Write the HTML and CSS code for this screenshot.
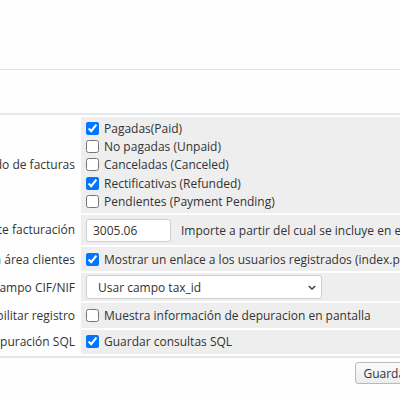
FILE: index.html
```html
<!DOCTYPE html>
<html lang="es">
<head>
<meta charset="utf-8">
<title>Facturas</title>
<link rel="stylesheet" href="styles.css">
</head>
<body>
<div class="page">
  <div class="topbar"></div>
  <div class="spacer"></div>
  <form class="section">
    <div class="grid">
      <div class="label">Estado de facturas</div>
      <div class="field list">
        <label class="opt"><input type="checkbox" checked> Pagadas(Paid)</label>
        <label class="opt"><input type="checkbox"> No pagadas (Unpaid)</label>
        <label class="opt"><input type="checkbox"> Canceladas (Canceled)</label>
        <label class="opt"><input type="checkbox" checked> Rectificativas (Refunded)</label>
        <label class="opt"><input type="checkbox"> Pendientes (Payment Pending)</label>
      </div>

      <div class="label">Límite facturación</div>
      <div class="field tall"><input class="text" type="text" value="3005.06"><span class="hint">Importe a partir del cual se incluye en el modelo 347</span></div>

      <div class="label">Enlace en área clientes</div>
      <div class="field"><label class="opt"><input type="checkbox" checked> Mostrar un enlace a los usuarios registrados (index.php)</label></div>

      <div class="label">Usar campo CIF/NIF</div>
      <div class="field sel"><div class="select">Usar campo tax_id<svg class="chev" viewBox="0 0 10 6" width="8" height="5"><path d="M1 1l4 4 4-4" fill="none" stroke="#444" stroke-width="1.8"/></svg></div></div>

      <div class="label">Habilitar registro</div>
      <div class="field"><label class="opt"><input type="checkbox"> Muestra información de depuracion en pantalla</label></div>

      <div class="label">Depuración SQL</div>
      <div class="field"><label class="opt"><input type="checkbox" checked> Guardar consultas SQL</label></div>
    </div>
  </form>
  <div class="actions"><button class="btn" type="button">Guardar</button></div>
</div>
</body>
</html>
```
FILE: styles.css
```css
html, body {
  margin: 0;
  padding: 0;
  overflow: hidden;
  background: #fefefe;
}
body {
  font-family: "Open Sans", "Noto Sans", sans-serif;
  font-size: 12px;
  color: #333;
}
.page {
  width: 424px;
}
.topbar {
  height: 69px;
  border-bottom: 1px solid #e2e2e2;
}
.spacer {
  height: 43px;
}
.section {
  margin: 0;
  border-top: 2px solid #e4e8ed;
  border-bottom: 2px solid #e4e8ed;
  padding: 2px 0;
}
.grid {
  display: grid;
  grid-template-columns: 79px 1fr;
  column-gap: 2px;
  row-gap: 2px;
}
.label {
  display: flex;
  justify-content: flex-end;
  align-items: center;
  overflow: hidden;
  white-space: nowrap;
  padding-right: 4px;
}
.field {
  background: #eeeeee;
  white-space: nowrap;
  padding: 3px 4px;
  display: flex;
  align-items: center;
  min-height: 18px;
}
.field.list {
  flex-direction: column;
  align-items: flex-start;
  padding: 2px 4px;
}
.field.tall {
  padding: 4px 5px 3px;
}
.field.sel {
  padding: 2px 5px;
}
.opt {
  display: flex;
  align-items: center;
  height: 18.4px;
}
.opt input {
  margin: 0 5px 0 1px;
  width: 13px;
  height: 13px;
}
.text {
  font: inherit;
  color: #333;
  padding: 0 6px;
  border: 1px solid #cfcfcf;
  border-radius: 3px;
  background: #fff;
  margin-right: 10px;
  height: 23px;
  box-sizing: border-box;
  width: 85px;
}
.select {
  width: 236px;
  height: 24px;
  box-sizing: border-box;
  border: 1px solid #cfcfcf;
  border-radius: 3px;
  background: #fff;
  display: flex;
  align-items: center;
  justify-content: space-between;
  padding: 0 5px 0 11px;
}
.actions {
  display: flex;
  justify-content: flex-end;
  padding-top: 4px;
  padding-right: 6px;
}
.btn {
  font: inherit;
  color: #333;
  height: 22px;
  padding: 0 7px;
  border: 1px solid #b9b9b9;
  border-radius: 3px;
  background: linear-gradient(#fafafa, #ececec);
}
```
